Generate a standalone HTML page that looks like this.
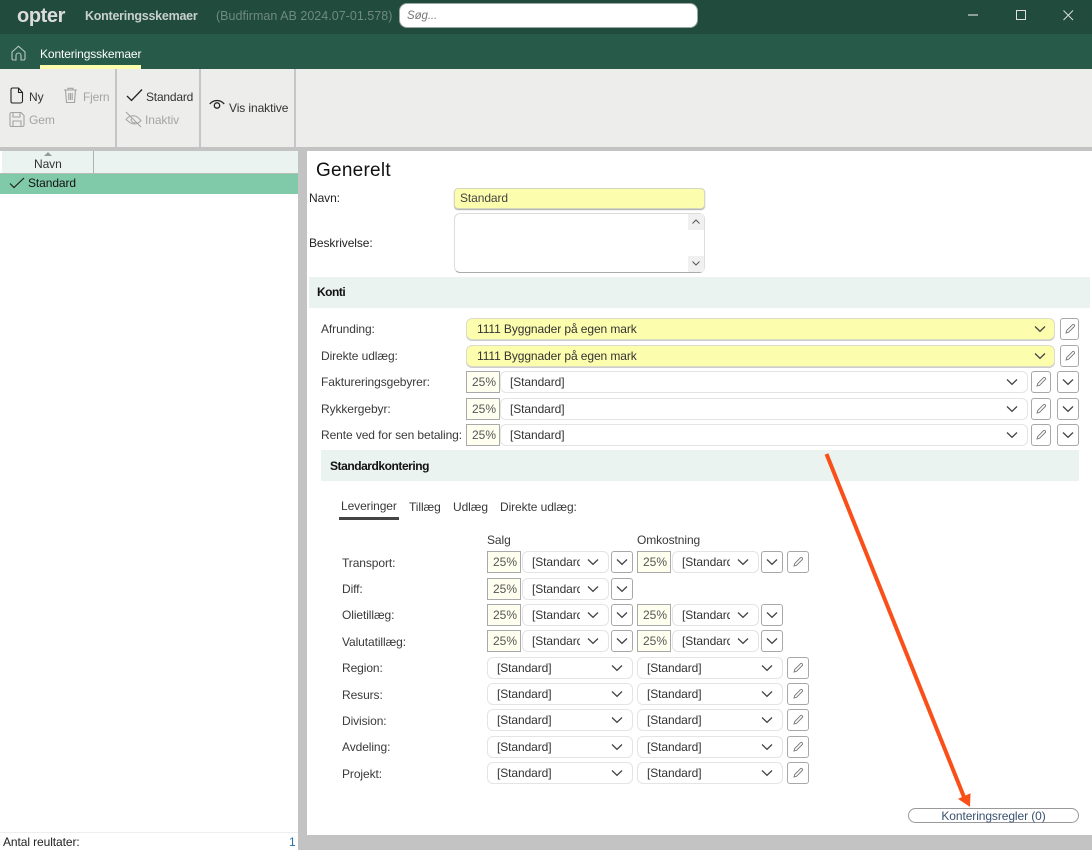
<!DOCTYPE html>
<html lang="da"><head><meta charset="utf-8"><title>Konteringsskemaer</title>
<style>
html,body{margin:0;padding:0;background:#fff}
body{width:1092px;height:850px;overflow:hidden;position:relative;font-family:"Liberation Sans",sans-serif;font-size:12px;color:#222;letter-spacing:-.09px}
div,span.a,svg.a{position:absolute;box-sizing:border-box}
.t{white-space:nowrap;line-height:14px;height:14px}
.l{color:#3a3a3a}
.y{background:#fdfdae;border:1px solid #dcdcc8;border-radius:6px;height:22px;box-shadow:0 1px 0 #ccc}
.s{background:#fff;border:1px solid #e4e4e4;border-radius:6px;height:22px;color:#333;line-height:21px;padding-left:9px;white-space:nowrap;overflow:hidden}
.s svg{position:absolute;top:6px;right:8px}
.p{background:#fffff0;border:1px solid #a9a9a9;height:22px;width:34px;text-align:right;padding-right:3px;line-height:21px;color:#555;letter-spacing:0}
.b{border:1px solid #a8a8a8;border-radius:3px;background:#fff;height:22px}
.b svg{position:absolute;left:50%;top:50%;transform:translate(-50%,-50%)}
.cl{overflow:hidden;width:48px;display:block}
</style></head><body>
<svg width="0" height="0" style="position:absolute">
<symbol id="c" viewBox="0 0 14 8"><path d="M2 1.500 7 6.300 12 1.500" fill="none" stroke="#444" stroke-width="1.300"/></symbol>
<symbol id="e" viewBox="0 0 14 14"><path d="M3 11 3.700 8.500 9.500 2.700a1.100 1.100 0 0 1 1.600 0l.2.200a1.100 1.100 0 0 1 0 1.600L5.500 10.300Z" fill="none" stroke="#777" stroke-width=".9"/></symbol>
</svg>

<!-- title bar -->
<div style="left:0;top:0;width:1092px;height:34px;background:#214b3d"></div>
<div class="t" style="left:17px;top:5px;height:22px;line-height:22px;font-size:20px;font-weight:bold;color:#dcdcdc;letter-spacing:-.4px">opter</div>
<div class="t" style="left:85px;top:9px;font-weight:bold;color:#c8d0cc;font-size:12.500px;letter-spacing:-.25px">Konteringsskemaer</div>
<div class="t" style="left:216px;top:9px;color:#6f8a80;font-size:12.500px;letter-spacing:.02px">(Budfirman AB 2024.07-01.578)</div>
<div style="left:399px;top:3px;width:299px;height:25px;background:#fff;border-radius:8px;border:1px solid #9aa8a2"></div>
<div class="t" style="left:407px;top:9px;color:#777;font-style:italic;font-size:11.500px">Søg...</div>
<div style="left:968px;top:14px;width:10px;height:2px;background:#8da096"></div>
<div style="left:1016px;top:10px;width:10px;height:10px;border:1px solid #e0e0e0"></div>
<svg class="a" style="left:1063px;top:10px" width="11" height="11" viewBox="0 0 11 11"><path d="M.5.500 10 10M10 .5.500 10" stroke="#ddd" stroke-width="1"/></svg>

<!-- nav bar -->
<div style="left:0;top:34px;width:1092px;height:35px;background:#275a49"></div>
<svg class="a" style="left:11px;top:45px" width="15" height="16" viewBox="0 0 15 16"><path d="M1 7 7.500 1.200 14 7v6.500a1.500 1.500 0 0 1-1.500 1.500H10V10.500a2.500 2.500 0 0 0-5 0V15H2.500A1.500 1.500 0 0 1 1 13.500Z" fill="none" stroke="#b9c7c1" stroke-width="1.100"/></svg>
<div class="t" style="left:40px;top:47px;color:#fff;font-size:12px;letter-spacing:-.12px">Konteringsskemaer</div>
<div style="left:40px;top:65px;width:101px;height:4px;background:#fdfdae"></div>

<!-- toolbar -->
<div style="left:0;top:69px;width:1092px;height:79px;background:#ededeb"></div>
<div style="left:115px;top:69px;width:2px;height:79px;background:#c6c6c6"></div>
<div style="left:199px;top:69px;width:2px;height:79px;background:#c6c6c6"></div>
<div style="left:294px;top:69px;width:2px;height:79px;background:#c6c6c6"></div>
<div style="left:0;top:147px;width:1092px;height:4px;background:#c3c3c3"></div>
<svg class="a" style="left:10px;top:87px" width="14" height="17" viewBox="0 0 14 17"><path d="M2.500 1H8.500L12.500 5.500V14a2 2 0 0 1-2 2h-8a1.500 1.500 0 0 1-1.500-1.500V2.500A1.500 1.500 0 0 1 2.500 1ZM8.500 1V5.500H12.500" fill="none" stroke="#222" stroke-width="1.100"/></svg>
<div class="t" style="left:29px;top:90px;color:#333">Ny</div>
<svg class="a" style="left:63px;top:87px" width="15" height="17" viewBox="0 0 15 17"><path d="M1 3H14M5 3V1.300H10V3M2.500 3 3.500 15.500H11.500L12.500 3M5.800 6V13M7.500 6V13M9.200 6V13" fill="none" stroke="#a3a3a3" stroke-width="1.100"/></svg>
<div class="t" style="left:83px;top:90px;color:#a5a5a5;letter-spacing:-.2px">Fjern</div>
<svg class="a" style="left:9px;top:111px" width="16" height="17" viewBox="0 0 16 17"><path d="M1 3A1.500 1.500 0 0 1 2.500 1.500H12L15 4.500V14a1.500 1.500 0 0 1-1.500 1.500H2.500A1.500 1.500 0 0 1 1 14ZM4 1.500V6H11V1.500M4 15.500V10H12V15.500" fill="none" stroke="#a3a3a3" stroke-width="1.100"/></svg>
<div class="t" style="left:29px;top:113px;color:#a5a5a5">Gem</div>
<svg class="a" style="left:126px;top:88px" width="17" height="14" viewBox="0 0 17 14"><path d="M1 8 5.500 12.500 16 1.500" fill="none" stroke="#222" stroke-width="1.300"/></svg>
<div class="t" style="left:146px;top:90px;color:#333;letter-spacing:-.2px">Standard</div>
<svg class="a" style="left:125px;top:111px" width="17" height="17" viewBox="0 0 17 17"><path d="M1 1 16 16M1 8.500C4 4.500 9 3.500 13 6.500L16 9.500C13 13 9 14 5.500 12L1 8.500ZM6.500 7.500A3 3 0 0 0 10.500 11.500" fill="none" stroke="#a3a3a3" stroke-width="1"/></svg>
<div class="t" style="left:145px;top:113px;color:#a5a5a5">Inaktiv</div>
<svg class="a" style="left:209px;top:98px" width="16" height="13" viewBox="0 0 16 13"><path d="M.8 6C4.500 1.300 11.500 1.300 15.200 6" fill="none" stroke="#222" stroke-width="1.300"/><circle cx="8" cy="7.500" r="2.700" fill="none" stroke="#222" stroke-width="1.300"/></svg>
<div class="t" style="left:229px;top:101px;color:#333">Vis inaktive</div>

<!-- left panel -->
<div style="left:2px;top:151px;width:296px;height:22px;background:#eaf3ef"></div>
<div style="left:93px;top:151px;width:1px;height:22px;background:#a9b5b0"></div>
<div style="left:0;top:173px;width:298px;height:1px;background:#b5bdb9"></div>
<div style="left:44px;top:152px;width:0;height:0;border-left:4px solid transparent;border-right:4px solid transparent;border-bottom:4px solid #999"></div>
<div class="t" style="left:34px;top:157px;color:#333">Navn</div>
<div style="left:0;top:174px;width:298px;height:20px;background:#80caa9"></div>
<svg class="a" style="left:9px;top:177px" width="16" height="12" viewBox="0 0 16 12"><path d="M1 6.500 5 10.500 15 1" fill="none" stroke="#222" stroke-width="1.200"/></svg>
<div class="t" style="left:28px;top:176px;color:#111">Standard</div>
<div style="left:0;top:832px;width:298px;height:1px;background:#eee"></div>
<div class="t" style="left:3px;top:835px;color:#222">Antal reultater:</div>
<div class="t" style="left:289px;top:835px;color:#2a6ea8">1</div>

<!-- splitter / frame -->
<div style="left:298px;top:151px;width:9px;height:699px;background:#c3c3c3"></div>
<div style="left:298px;top:835px;width:794px;height:15px;background:#c3c3c3"></div>

<!-- general -->
<div class="t" style="left:316px;top:160px;height:22px;line-height:22px;font-size:19px;color:#111;letter-spacing:.25px">Generelt</div>
<div class="t" style="left:309px;top:191px;color:#222">Navn:</div>
<div class="y" style="left:454px;top:188px;width:251px;height:21px;padding-left:5px;line-height:19px;color:#444;border-color:#d5d5c0;border-radius:4px;box-shadow:0 1px 1px #aaa">Standard</div>
<div class="t" style="left:309px;top:236px;color:#222">Beskrivelse:</div>
<div style="left:454px;top:213px;width:251px;height:60px;background:#fff;border:1px solid #ddd;border-bottom-color:#aaa;border-radius:6px"></div>
<div style="left:688px;top:214px;width:16px;height:16px;background:#f0f0f0"></div>
<svg class="a" style="left:692px;top:219px" width="8" height="5" viewBox="0 0 8 5"><path d="M.5 4.500 4 1 7.500 4.500" fill="none" stroke="#555"/></svg>
<div style="left:688px;top:256px;width:16px;height:16px;background:#f0f0f0"></div>
<svg class="a" style="left:692px;top:261px" width="8" height="5" viewBox="0 0 8 5"><path d="M.5.500 4 4 7.500.500" fill="none" stroke="#555"/></svg>

<!-- konti -->
<div style="left:309px;top:277px;width:781px;height:31px;background:#eaf3ef"></div>
<div class="t" style="left:317px;top:285px;font-weight:bold;color:#111;letter-spacing:-.5px">Konti</div>

<div class="t l" style="left:321px;top:322px">Afrunding:</div>
<div class="y" style="left:466px;top:318px;width:589px;padding-left:10px;line-height:20px;color:#333">1111 Byggnader på egen mark<svg class="a" style="right:7px;top:6px" width="14" height="8"><use href="#c"/></svg></div>
<div class="b" style="left:1060px;top:318px;width:19px"><svg width="14" height="14"><use href="#e"/></svg></div>

<div class="t l" style="left:321px;top:349px">Direkte udlæg:</div>
<div class="y" style="left:466px;top:345px;width:589px;padding-left:10px;line-height:20px;color:#333">1111 Byggnader på egen mark<svg class="a" style="right:7px;top:6px" width="14" height="8"><use href="#c"/></svg></div>
<div class="b" style="left:1060px;top:345px;width:19px"><svg width="14" height="14"><use href="#e"/></svg></div>

<div class="t l" style="left:321px;top:375px">Faktureringsgebyrer:</div>
<div class="p" style="left:466px;top:371px">25%</div>
<div class="s" style="left:500px;top:371px;width:528px">[Standard]<svg width="14" height="8"><use href="#c"/></svg></div>
<div class="b" style="left:1031px;top:371px;width:20px"><svg width="14" height="14"><use href="#e"/></svg></div>
<div class="b" style="left:1057px;top:371px;width:22px"><svg width="14" height="8"><use href="#c"/></svg></div>

<div class="t l" style="left:321px;top:402px">Rykkergebyr:</div>
<div class="p" style="left:466px;top:398px">25%</div>
<div class="s" style="left:500px;top:398px;width:528px">[Standard]<svg width="14" height="8"><use href="#c"/></svg></div>
<div class="b" style="left:1031px;top:398px;width:20px"><svg width="14" height="14"><use href="#e"/></svg></div>
<div class="b" style="left:1057px;top:398px;width:22px"><svg width="14" height="8"><use href="#c"/></svg></div>

<div class="t l" style="left:321px;top:428px">Rente ved for sen betaling:</div>
<div class="p" style="left:466px;top:424px">25%</div>
<div class="s" style="left:500px;top:424px;width:528px">[Standard]<svg width="14" height="8"><use href="#c"/></svg></div>
<div class="b" style="left:1031px;top:424px;width:20px"><svg width="14" height="14"><use href="#e"/></svg></div>
<div class="b" style="left:1057px;top:424px;width:22px"><svg width="14" height="8"><use href="#c"/></svg></div>

<!-- standardkontering -->
<div style="left:321px;top:450px;width:758px;height:31px;background:#eaf3ef"></div>
<div class="t" style="left:330px;top:459px;font-weight:bold;color:#111;letter-spacing:-.45px">Standardkontering</div>
<div class="t l" style="left:341px;top:499px">Leveringer</div>
<div style="left:339px;top:517px;width:60px;height:3px;background:#444"></div>
<div class="t l" style="left:409px;top:500px">Tillæg</div>
<div class="t l" style="left:453px;top:500px">Udlæg</div>
<div class="t l" style="left:500px;top:500px">Direkte udlæg:</div>
<div class="t l" style="left:487px;top:533px">Salg</div>
<div class="t l" style="left:637px;top:533px">Omkostning</div>

<!-- Transport -->
<div class="t l" style="left:342px;top:556px">Transport:</div>
<div class="p" style="left:487px;top:551px">25%</div>
<div class="s" style="left:522px;top:551px;width:87px"><span class="cl">[Standard]</span><svg width="14" height="8"><use href="#c"/></svg></div>
<div class="b" style="left:611px;top:551px;width:22px"><svg width="14" height="8"><use href="#c"/></svg></div>
<div class="p" style="left:637px;top:551px">25%</div>
<div class="s" style="left:672px;top:551px;width:87px"><span class="cl">[Standard]</span><svg width="14" height="8"><use href="#c"/></svg></div>
<div class="b" style="left:761px;top:551px;width:22px"><svg width="14" height="8"><use href="#c"/></svg></div>
<div class="b" style="left:787px;top:551px;width:22px"><svg width="14" height="14"><use href="#e"/></svg></div>

<!-- Diff -->
<div class="t l" style="left:342px;top:582px">Diff:</div>
<div class="p" style="left:487px;top:578px">25%</div>
<div class="s" style="left:522px;top:578px;width:87px"><span class="cl">[Standard]</span><svg width="14" height="8"><use href="#c"/></svg></div>
<div class="b" style="left:611px;top:578px;width:22px"><svg width="14" height="8"><use href="#c"/></svg></div>

<!-- Olie -->
<div class="t l" style="left:342px;top:608px">Olietillæg:</div>
<div class="p" style="left:487px;top:604px">25%</div>
<div class="s" style="left:522px;top:604px;width:87px"><span class="cl">[Standard]</span><svg width="14" height="8"><use href="#c"/></svg></div>
<div class="b" style="left:611px;top:604px;width:22px"><svg width="14" height="8"><use href="#c"/></svg></div>
<div class="p" style="left:637px;top:604px">25%</div>
<div class="s" style="left:672px;top:604px;width:87px"><span class="cl">[Standard]</span><svg width="14" height="8"><use href="#c"/></svg></div>
<div class="b" style="left:761px;top:604px;width:22px"><svg width="14" height="8"><use href="#c"/></svg></div>

<!-- Valuta -->
<div class="t l" style="left:342px;top:635px">Valutatillæg:</div>
<div class="p" style="left:487px;top:630px">25%</div>
<div class="s" style="left:522px;top:630px;width:87px"><span class="cl">[Standard]</span><svg width="14" height="8"><use href="#c"/></svg></div>
<div class="b" style="left:611px;top:630px;width:22px"><svg width="14" height="8"><use href="#c"/></svg></div>
<div class="p" style="left:637px;top:630px">25%</div>
<div class="s" style="left:672px;top:630px;width:87px"><span class="cl">[Standard]</span><svg width="14" height="8"><use href="#c"/></svg></div>
<div class="b" style="left:761px;top:630px;width:22px"><svg width="14" height="8"><use href="#c"/></svg></div>

<!-- wide rows -->
<div class="t l" style="left:342px;top:661px">Region:</div>
<div class="s" style="left:487px;top:657px;width:146px">[Standard]<svg width="14" height="8"><use href="#c"/></svg></div>
<div class="s" style="left:637px;top:657px;width:146px">[Standard]<svg width="14" height="8"><use href="#c"/></svg></div>
<div class="b" style="left:787px;top:657px;width:22px"><svg width="14" height="14"><use href="#e"/></svg></div>

<div class="t l" style="left:342px;top:688px">Resurs:</div>
<div class="s" style="left:487px;top:683px;width:146px">[Standard]<svg width="14" height="8"><use href="#c"/></svg></div>
<div class="s" style="left:637px;top:683px;width:146px">[Standard]<svg width="14" height="8"><use href="#c"/></svg></div>
<div class="b" style="left:787px;top:683px;width:22px"><svg width="14" height="14"><use href="#e"/></svg></div>

<div class="t l" style="left:342px;top:714px">Division:</div>
<div class="s" style="left:487px;top:709px;width:146px">[Standard]<svg width="14" height="8"><use href="#c"/></svg></div>
<div class="s" style="left:637px;top:709px;width:146px">[Standard]<svg width="14" height="8"><use href="#c"/></svg></div>
<div class="b" style="left:787px;top:709px;width:22px"><svg width="14" height="14"><use href="#e"/></svg></div>

<div class="t l" style="left:342px;top:740px">Avdeling:</div>
<div class="s" style="left:487px;top:736px;width:146px">[Standard]<svg width="14" height="8"><use href="#c"/></svg></div>
<div class="s" style="left:637px;top:736px;width:146px">[Standard]<svg width="14" height="8"><use href="#c"/></svg></div>
<div class="b" style="left:787px;top:736px;width:22px"><svg width="14" height="14"><use href="#e"/></svg></div>

<div class="t l" style="left:342px;top:767px">Projekt:</div>
<div class="s" style="left:487px;top:762px;width:146px">[Standard]<svg width="14" height="8"><use href="#c"/></svg></div>
<div class="s" style="left:637px;top:762px;width:146px">[Standard]<svg width="14" height="8"><use href="#c"/></svg></div>
<div class="b" style="left:787px;top:762px;width:22px"><svg width="14" height="14"><use href="#e"/></svg></div>

<!-- button -->
<div style="left:908px;top:808px;width:171px;height:15px;border:1px solid #999;border-radius:8px;background:#fff;text-align:center;line-height:14px;color:#3b5170">Konteringsregler (0)</div>

<!-- arrow -->
<svg class="a" style="left:0;top:0;pointer-events:none" width="1092" height="850" viewBox="0 0 1092 850"><path d="M826.500 454 964 797" stroke="#f9501a" stroke-width="4" fill="none"/><path d="M969.500 806 959 799 970 794Z" fill="#f9501a" stroke="#f9501a" stroke-width="1"/></svg>
</body></html>
